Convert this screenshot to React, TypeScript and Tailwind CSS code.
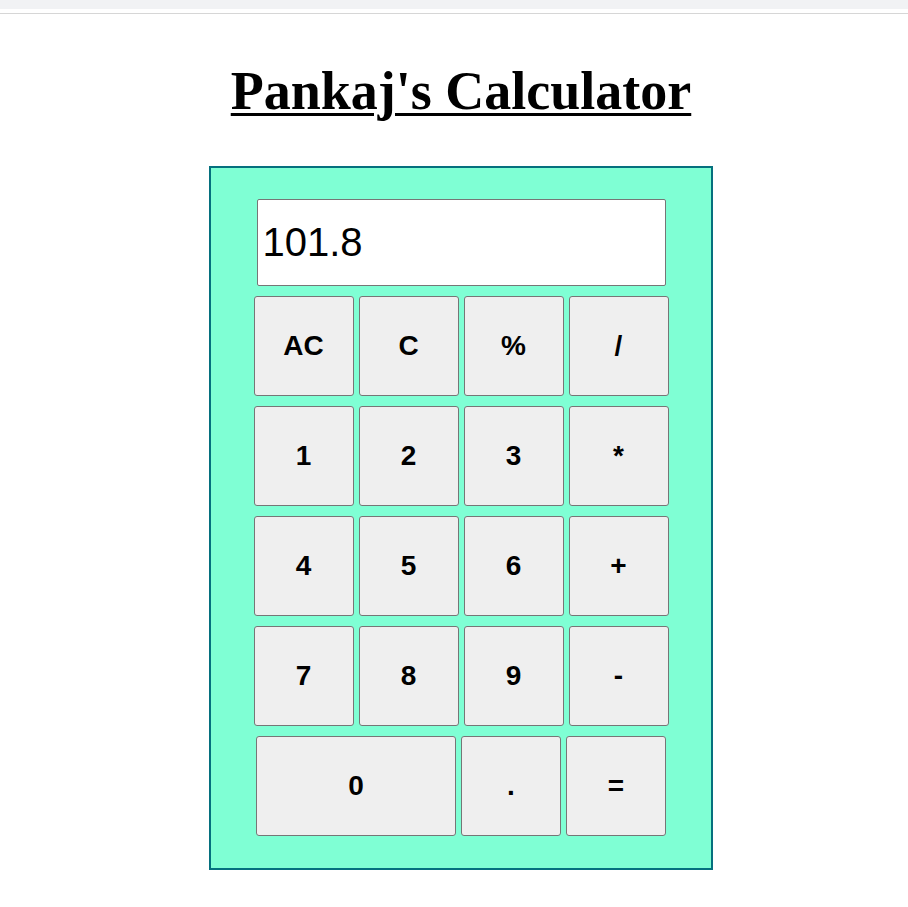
import { useState } from 'react';

const rows = [
  ['AC', 'C', '%', '/'],
  ['1', '2', '3', '*'],
  ['4', '5', '6', '+'],
  ['7', '8', '9', '-'],
];

function Key({ label, wide, onPress }: { label: string; wide?: boolean; onPress: (k: string) => void }) {
  return (
    <button
      onClick={() => onPress(label)}
      className={`${wide ? 'w-[200px]' : 'w-[100px]'} h-[100px] flex items-center justify-center pb-[1px] bg-[#efefef] border border-[#767676] rounded-[3px] text-[28px] font-bold text-black cursor-pointer hover:bg-[#e5e5e5]`}
      style={{ fontFamily: '"Liberation Sans", Arial, sans-serif' }}
    >
      {label}
    </button>
  );
}

export default function App() {
  const [display, setDisplay] = useState('101.8');

  function press(k: string) {
    if (k === 'AC') return setDisplay('');
    if (k === 'C') return setDisplay(d => d.slice(0, -1));
    if (k === '=') {
      try {
        // eslint-disable-next-line no-new-func
        const v = Function(`return (${display.replace(/%/g, '/100')})`)();
        setDisplay(String(v));
      } catch {
        setDisplay('Error');
      }
      return;
    }
    setDisplay(d => d + k);
  }

  return (
    <div className="min-h-screen bg-white">
      <div className="h-[9px] bg-[#f1f2f4]" />
      <div className="mt-[4px] h-px bg-[#d6d6d6]" />

      <main className="flex flex-col items-center pl-[14px]">
        <h1
          className="mt-[46px] text-[54px] leading-[62px] font-bold text-black underline decoration-[3px] underline-offset-[4px]"
          style={{ fontFamily: '"Liberation Serif", "Times New Roman", serif' }}
        >
          Pankaj's Calculator
        </h1>

        {/* Calculator body */}
        <div className="mt-[44px] w-[504px] h-[704px] bg-[#7fffd4] border-2 border-[#05707e] flex flex-col items-center pt-[31px] gap-[10px]">
          <input
            type="text"
            value={display}
            onChange={e => setDisplay(e.target.value)}
            className="w-[409px] h-[87px] bg-white border border-[#767676] rounded-[2px] pl-[5px] pr-[2px] text-[40px] text-black outline-none"
            style={{ fontFamily: '"Liberation Sans", Arial, sans-serif' }}
          />
          {rows.map((row, i) => (
            <div key={i} className="flex gap-[5px]">
              {row.map(k => (
                <Key key={k} label={k} onPress={press} />
              ))}
            </div>
          ))}
          <div className="flex gap-[5px]">
            <Key label="0" wide onPress={press} />
            <Key label="." onPress={press} />
            <Key label="=" onPress={press} />
          </div>
        </div>
      </main>
    </div>
  );
}
